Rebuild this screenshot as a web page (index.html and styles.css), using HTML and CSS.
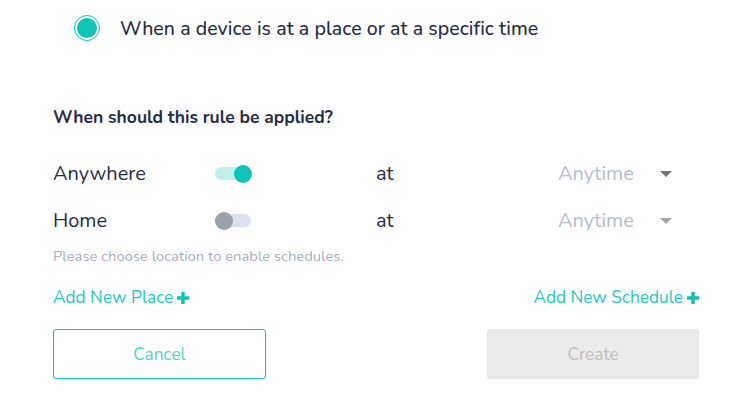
FILE: index.html
```html
<!DOCTYPE html>
<html>
<head>
<meta charset="utf-8">
<link rel="stylesheet" href="styles.css">
</head>
<body>
<div class="page">
  <div class="option">
    <span class="radio"><span class="radio-dot"></span></span>
    <span class="option-label">When a device is at a place or at a specific time</span>
  </div>
  <h2 class="question">When should this rule be applied?</h2>
  <div class="rows">
    <div class="row">
      <span class="place">Anywhere</span>
      <span class="toggle on"><span class="knob"></span></span>
      <span class="at">at</span>
      <span class="select"><span class="select-text">Anytime</span><span class="caret dark"></span></span>
    </div>
    <div class="row">
      <span class="place">Home</span>
      <span class="toggle off"><span class="knob"></span></span>
      <span class="at">at</span>
      <span class="select"><span class="select-text">Anytime</span><span class="caret light"></span></span>
    </div>
  </div>
  <p class="hint">Please choose location to enable schedules.</p>
  <div class="links">
    <a class="add">Add New Place <svg class="plus" viewBox="0 0 14 14"><path d="M5 0h4v5h5v4H9v5H5V9H0V5h5z"/></svg></a>
    <a class="add">Add New Schedule <svg class="plus" viewBox="0 0 14 14"><path d="M5 0h4v5h5v4H9v5H5V9H0V5h5z"/></svg></a>
  </div>
  <div class="buttons">
    <button class="btn cancel">Cancel</button>
    <button class="btn create">Create</button>
  </div>
</div>
</body>
</html>
```
FILE: styles.css
```css
* { box-sizing: border-box; }
html, body { margin: 0; padding: 0; background: #fff; }
body { font-family: "Nunito", Lato, sans-serif; color: #262c45; }
.page { width: 749px; padding: 0 50px 0 53px; }
.option { display: flex; align-items: center; height: 56px; padding-left: 21px; }
.radio { width: 26px; height: 26px; border: 1.5px solid #0cc5b5; border-radius: 50%; display: flex; align-items: center; justify-content: center; }
.radio-dot { width: 20px; height: 20px; border-radius: 50%; background: #0cc5b5; }
.option-label { margin-left: 20px; font-size: 19.5px; font-weight: 500; color: #262c45; letter-spacing: 0.05px; }
.question { margin: 50px 0 0; font-size: 17.5px; font-weight: 700; color: #262c45; line-height: 22px; }
.rows { margin-top: 22px; }
.row { display: grid; grid-template-columns: 162px 161px 182px 1fr; align-items: center; height: 47px; }
.place { font-size: 20px; font-weight: 400; color: #262c45; }
.toggle { position: relative; width: 36px; height: 13px; border-radius: 7px; }
.toggle .knob { position: absolute; top: -2.5px; width: 18px; height: 18px; border-radius: 50%; }
.toggle.on { background: #c4f0ec; }
.toggle.on .knob { right: -1px; background: #0cc5b5; }
.toggle.off { background: #dde1ec; }
.toggle.off .knob { left: 0; background: #9aa1aa; }
.at { font-size: 20px; color: #262c45; }
.select { display: flex; align-items: center; justify-content: space-between; width: 114px; }
.select-text { font-size: 20px; color: #b9bdcd; }
.caret { width: 0; height: 0; border-left: 6px solid transparent; border-right: 6px solid transparent; border-top: 6px solid #777; }
.caret.light { border-top-color: #a6a6a6; }
.hint { margin: 2px 0 0; font-size: 14.8px; color: #a9adbe; line-height: 20px; }
.links { display: flex; justify-content: space-between; margin-top: 22px; }
.add { display: flex; align-items: center; font-size: 17.3px; font-weight: 400; color: #1ccbbb; line-height: 20px; }
.plus { width: 12px; height: 12px; margin-left: 4px; fill: #0cc5b5; }
.buttons { display: flex; justify-content: space-between; margin-top: 21px; }
.btn { width: 213px; height: 50px; border-radius: 3px; font-family: inherit; font-size: 17.3px; font-weight: 400; }
.cancel { background: #fff; border: 1.5px solid #0cc5b5; color: #52d5c9; }
.create { background: #ebebeb; border: 1px solid #e6e6e6; color: #c0c0c0; width: 212px; }
```
